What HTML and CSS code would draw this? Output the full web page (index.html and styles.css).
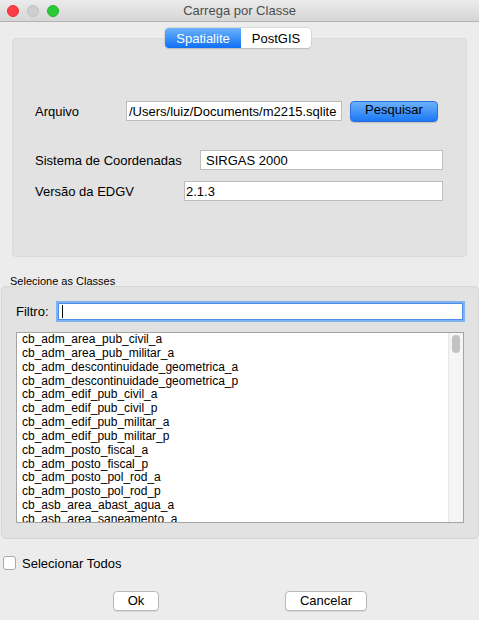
FILE: index.html
```html
<!DOCTYPE html>
<html>
<head>
<meta charset="utf-8">
<link rel="stylesheet" href="styles.css">
</head>
<body>
<div class="window">
  <div class="titlebar">
    <div class="lights">
      <span class="light red"></span>
      <span class="light gray"></span>
      <span class="light green"></span>
    </div>
    <div class="title">Carrega por Classe</div>
  </div>

  <div class="tabs">
    <span class="tab active">Spatialite</span>
    <span class="tab">PostGIS</span>
  </div>
  <div class="pane">
    <div class="row row-file">
      <span class="lbl lbl-file">Arquivo</span>
      <div class="field f-file">/Users/luiz/Documents/m2215.sqlite</div>
      <button class="btn-blue">Pesquisar</button>
    </div>
    <div class="row row-srs">
      <span class="lbl lbl-srs">Sistema de Coordenadas</span>
      <div class="field f-srs">SIRGAS 2000</div>
    </div>
    <div class="row row-edgv">
      <span class="lbl lbl-edgv">Versão da EDGV</span>
      <div class="field f-edgv">2.1.3</div>
    </div>
  </div>

  <div class="group-title">Selecione as Classes</div>
  <div class="group">
    <div class="filter-row">
      <span class="lbl">Filtro:</span>
      <div class="filter"><span class="caret"></span></div>
    </div>
    <div class="list">
      <div class="items">
        <div>cb_adm_area_pub_civil_a</div>
        <div>cb_adm_area_pub_militar_a</div>
        <div>cb_adm_descontinuidade_geometrica_a</div>
        <div>cb_adm_descontinuidade_geometrica_p</div>
        <div>cb_adm_edif_pub_civil_a</div>
        <div>cb_adm_edif_pub_civil_p</div>
        <div>cb_adm_edif_pub_militar_a</div>
        <div>cb_adm_edif_pub_militar_p</div>
        <div>cb_adm_posto_fiscal_a</div>
        <div>cb_adm_posto_fiscal_p</div>
        <div>cb_adm_posto_pol_rod_a</div>
        <div>cb_adm_posto_pol_rod_p</div>
        <div>cb_asb_area_abast_agua_a</div>
        <div>cb_asb_area_saneamento_a</div>
      </div>
      <div class="scrollbar"><span class="thumb"></span></div>
    </div>
  </div>

  <div class="check-row">
    <span class="checkbox"></span>
    <span class="lbl">Selecionar Todos</span>
  </div>

  <div class="buttons">
    <button class="btn btn-ok">Ok</button>
    <button class="btn btn-cancel">Cancelar</button>
  </div>
</div>
</body>
</html>
```

FILE: styles.css
```css
* { box-sizing: border-box; }
html, body {
  margin: 0;
  padding: 0;
  background: #ececec;
}
body {
  width: 479px;
  height: 620px;
  overflow: hidden;
  font-family: "Liberation Sans", Arial, sans-serif;
  font-size: 13px;
  color: #000;
}
.window {
  width: 479px;
  height: 620px;
  background: #ececec;
  display: flex;
  flex-direction: column;
}
.titlebar {
  height: 22px;
  flex: none;
  background: linear-gradient(#ebebeb, #d6d6d6);
  border-bottom: 1px solid #b3b3b3;
  display: flex;
  align-items: center;
  position: relative;
}
.lights {
  display: flex;
  gap: 8px;
  padding-left: 7px;
}
.light {
  width: 12px;
  height: 12px;
  border-radius: 50%;
  display: block;
}
.red { background: #fc3d44; border: 1px solid #e2333a; }
.gray { background: #cfcfcf; border: 1px solid #c0c0c0; }
.green { background: #2cc937; border: 1px solid #24b12e; }
.title {
  position: absolute;
  left: 0;
  right: 0;
  top: 3px;
  text-align: center;
  color: #4d4d4d;
  font-size: 13px;
}
.tabs {
  flex: none;
  display: flex;
  align-self: center;
  margin-top: 6px;
  margin-left: -3px;
  height: 20px;
  border-radius: 4px;
  background: #fff;
  box-shadow: 0 0 0 0.5px #c4c4c4, 0 1px 1px rgba(0,0,0,0.18);
  position: relative;
  z-index: 1;
}
.tab {
  display: flex;
  align-items: center;
  justify-content: center;
  height: 20px;
  font-size: 13px;
}
.tab.active {
  width: 76px;
  color: #fff;
  border-radius: 4px 0 0 4px;
  background: linear-gradient(#6cb3fa, #0f70f6);
}
.tab:not(.active) { width: 70px; }
.pane {
  flex: none;
  margin: -10px 12px 0 12px;
  height: 219px;
  background: #e2e2e2;
  border: 1px solid #dadada;
  border-radius: 4px;
  padding-left: 22px;
  padding-top: 62px;
  display: flex;
  flex-direction: column;
}
.row {
  display: flex;
  align-items: center;
  height: 20px;
}
.row-srs { margin-top: 29px; }
.row-edgv { margin-top: 11px; }
.lbl { white-space: nowrap; }
.lbl-file { width: 91px; }
.lbl-srs { width: 165px; }
.lbl-edgv { width: 149px; }
.field {
  height: 20px;
  background: #fff;
  border: 1px solid #bdbdbd;
  padding: 0 0 0 4px;
  display: flex;
  align-items: center;
  white-space: nowrap;
  overflow: hidden;
  font-size: 13px;
}
.f-file { width: 216px; padding-left: 2px; }
.f-srs { width: 243px; padding-left: 5px; }
.f-edgv { width: 259px; padding-left: 1px; }
.btn-blue {
  margin-left: 8px;
  width: 88px;
  height: 21px;
  border: 1px solid #2a6ee0;
  border-radius: 4px;
  background: linear-gradient(#6cb2fb, #1b78f5);
  font-family: inherit;
  font-size: 13px;
  color: #000;
  padding: 0 0 3px 0;
  box-shadow: 0 1px 1px rgba(0,0,0,0.15);
}
.group-title {
  flex: none;
  margin-top: 18px;
  padding-left: 10px;
  font-size: 11px;
  height: 11px;
  line-height: 13px;
}
.group {
  flex: none;
  margin: 0 0 0 1px;
  height: 253px;
  background: #e2e2e2;
  border: 1px solid #d6d6d6;
  border-radius: 5px;
  padding: 14px 15px 0 14px;
  display: flex;
  flex-direction: column;
}
.filter-row {
  display: flex;
  align-items: center;
  height: 21px;
}
.filter-row .lbl { width: 42px; }
.filter {
  width: 405px;
  height: 17px;
  background: #fff;
  border: 1px solid #4d8fe6;
  box-shadow: 0 0 0 2px #7fb2f0;
  display: flex;
  align-items: center;
  padding-left: 3px;
}
.caret {
  width: 1px;
  height: 13px;
  background: #000;
  display: block;
}
.list {
  margin-top: 10px;
  width: 448px;
  height: 191px;
  background: #fff;
  border: 1px solid #a4a4a4;
  display: flex;
  overflow: hidden;
}
.items {
  flex: 1;
  padding: 0 0 0 5px;
  line-height: 13.85px;
  font-size: 12px;
  overflow: hidden;
  white-space: nowrap;
}
.scrollbar {
  width: 15px;
  flex: none;
  background: #f5f5f5;
  border-left: 1px solid #e6e6e6;
  padding: 2px 0 0 3px;
}
.thumb {
  display: block;
  width: 8px;
  height: 18px;
  border-radius: 4px;
  background: #c2c2c2;
}
.check-row {
  flex: none;
  display: flex;
  align-items: center;
  margin-top: 17px;
  padding-left: 3px;
  height: 14px;
}
.checkbox {
  width: 13px;
  height: 14px;
  background: #fff;
  border: 1px solid #a9a9a9;
  border-radius: 3px;
  margin-right: 6px;
  display: block;
}
.buttons {
  flex: none;
  display: flex;
  margin-top: 21px;
  padding-left: 113px;
}
.btn {
  height: 20px;
  background: #fff;
  border: 1px solid #b8b8b8;
  border-radius: 4px;
  font-family: inherit;
  font-size: 13px;
  color: #000;
  padding: 0 0 2px 0;
  box-shadow: 0 1px 0 rgba(0,0,0,0.08);
}
.btn-ok { width: 46px; }
.btn-cancel { width: 82px; margin-left: 126px; }
```
